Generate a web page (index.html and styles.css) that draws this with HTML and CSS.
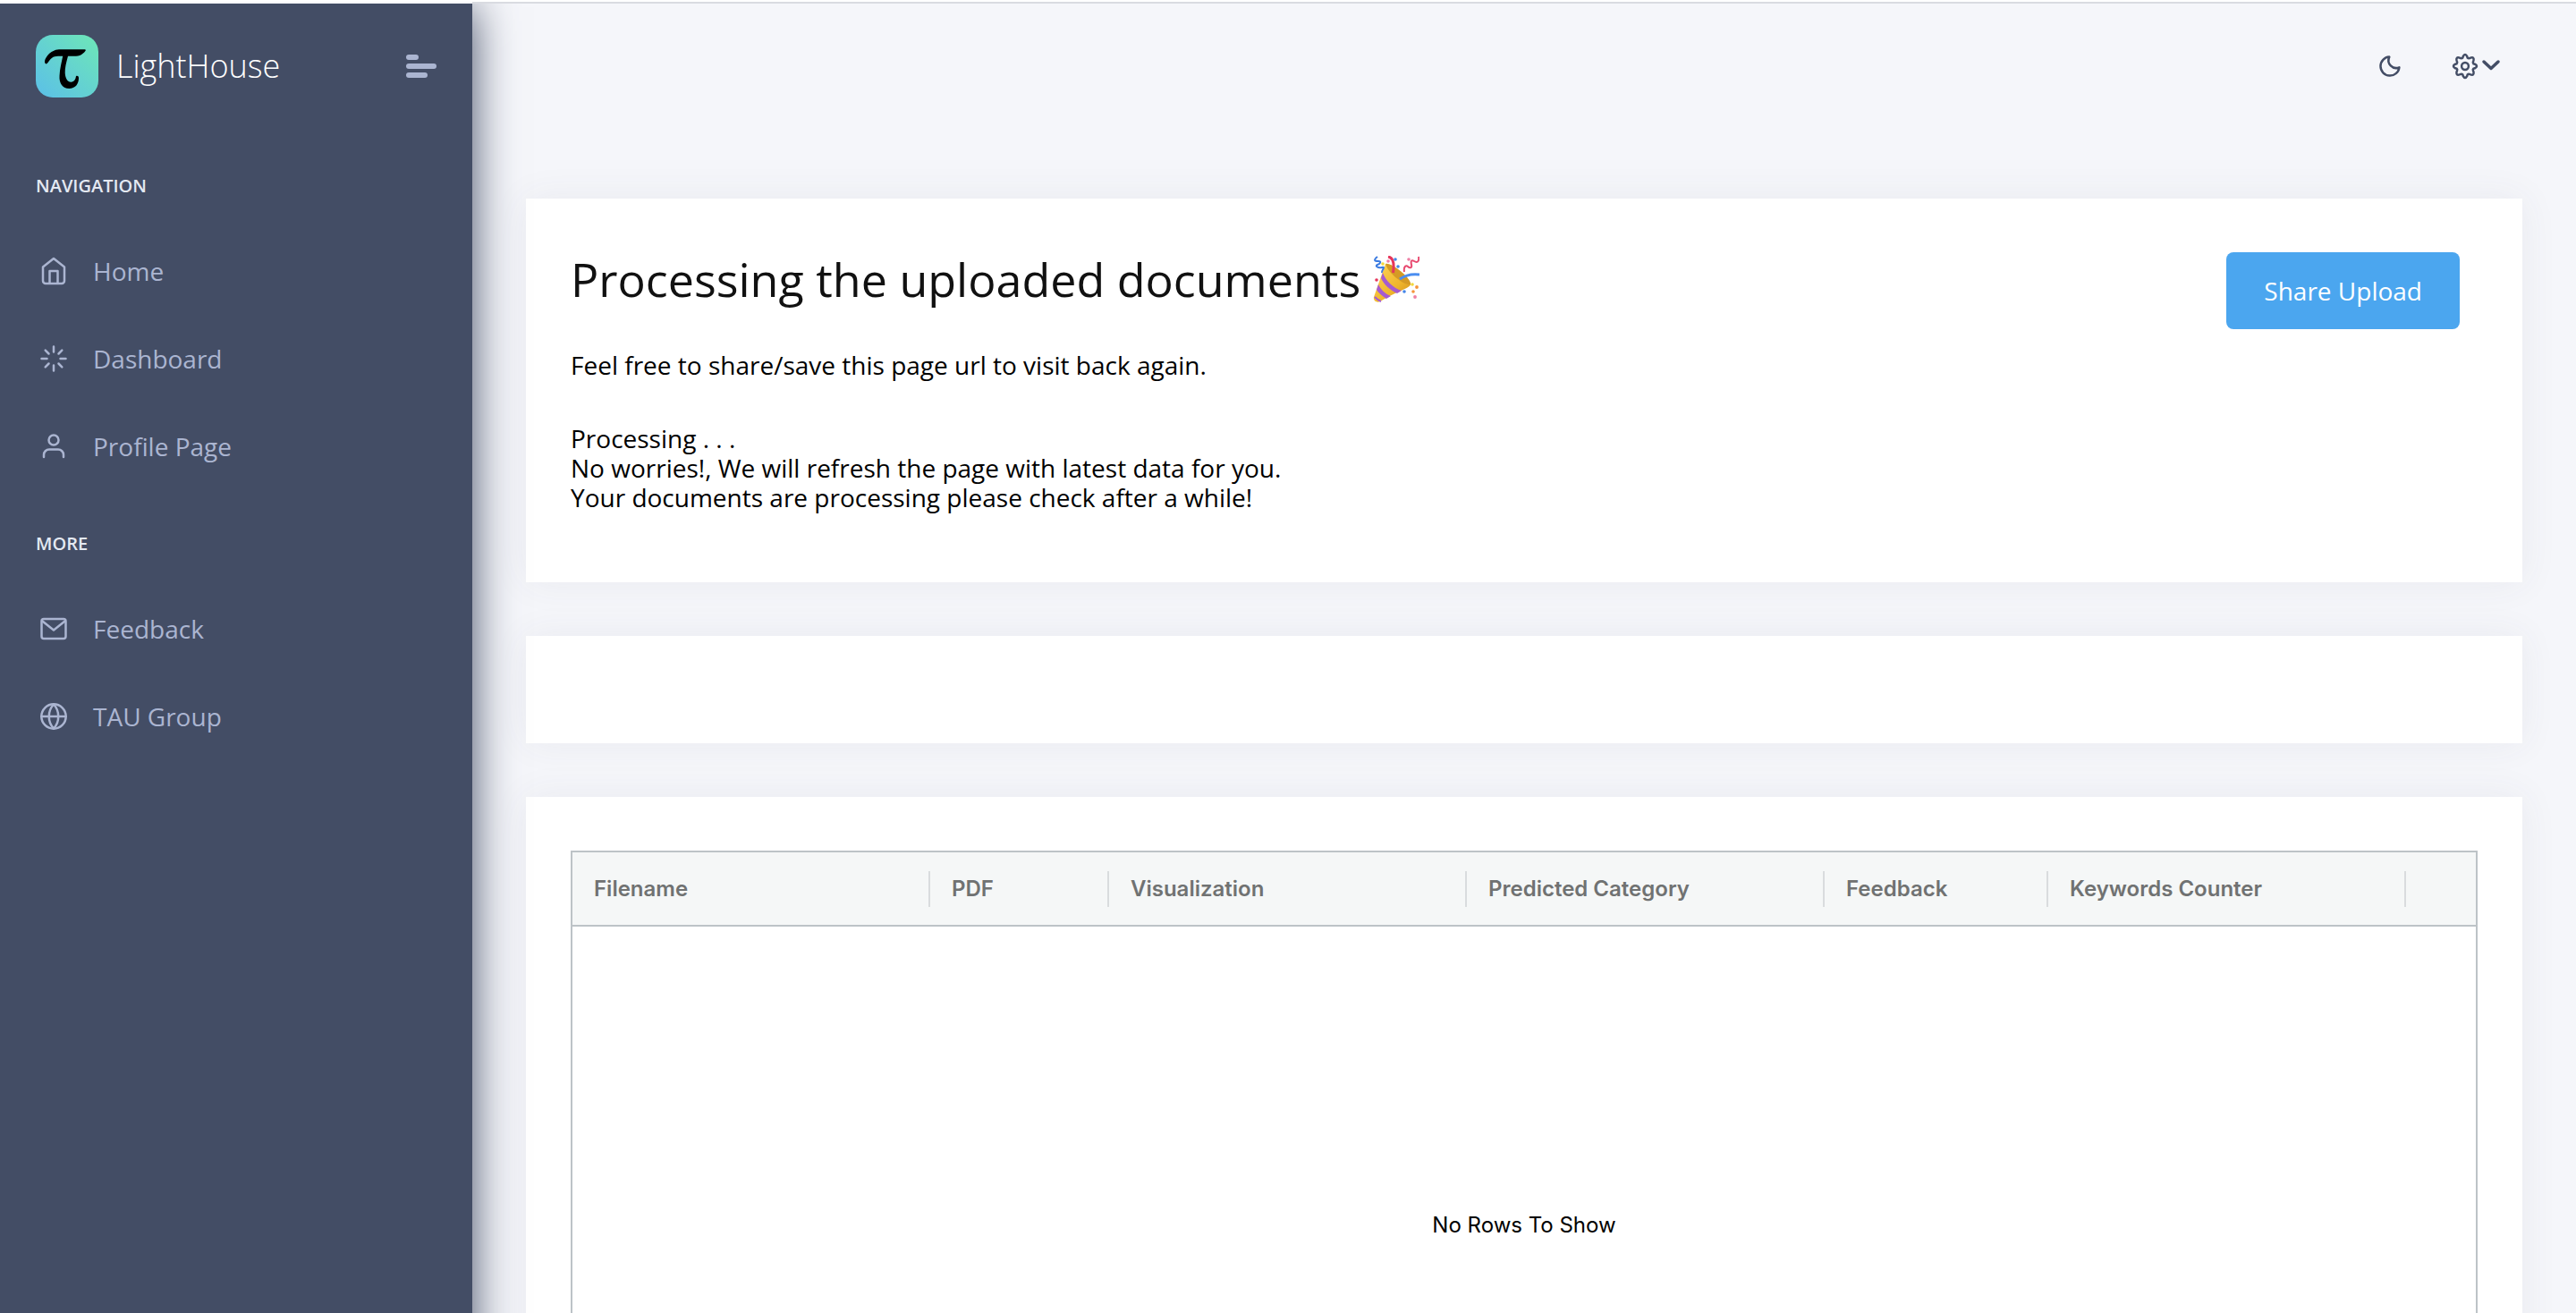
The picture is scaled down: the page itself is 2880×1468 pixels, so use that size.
FILE: index.html
```html
<!DOCTYPE html>
<html lang="en">
<head>
<meta charset="utf-8">
<meta name="viewport" content="width=device-width, initial-scale=1">
<title>LightHouse</title>
<link rel="stylesheet" href="styles.css">
</head>
<body>
<div class="app">
  <aside class="sidebar">
    <div class="brand">
      <svg class="brand-logo" viewBox="0 0 70 70" aria-hidden="true">
        <defs>
          <linearGradient id="logo-fill" x1="0" y1="1" x2="1" y2="0">
            <stop offset="0" stop-color="#5bbfe8"/>
            <stop offset="1" stop-color="#6ee7b7"/>
          </linearGradient>
        </defs>
        <rect width="70" height="70" rx="19" fill="url(#logo-fill)"/>
        <path d="M10.2 31C9 27 16 16.500 26 16.200L54 16.200C57 16.200 56 18 53 20.500C50.500 23 48 23.700 45 23.700L36 23.700C34 31 32.500 37 32.700 42.500C33 49 36 53 39.500 52.700C43 52.500 44.500 49.500 44.800 47C45 45 48 45.500 48 48C48.200 55 44 60 37.300 60C30 60 26 54 26.500 46C26.800 38 29 30 30.200 23.700L25 23.700C19 23.700 16.500 26.500 13.500 31C12.300 32.800 10.800 33 10.200 31Z" fill="#000"/>
      </svg>
      <span class="brand-name">LightHouse</span>
      <button class="menu-toggle" type="button" aria-label="Toggle menu">
        <svg width="34" height="26" viewBox="0 0 34 26" fill="currentColor" aria-hidden="true">
          <rect width="14" height="6" rx="3"/><rect y="10" width="34" height="6" rx="3"/><rect y="20" width="24" height="6" rx="3"/>
        </svg>
      </button>
    </div>
    <nav class="nav">
      <h2 class="nav-title">NAVIGATION</h2>
      <a class="nav-link" href="#home">
        <svg class="nav-icon" viewBox="0 0 40 40" aria-hidden="true"><path d="M8 15.500 20 6l12 9.500V31a3 3 0 0 1-3 3H11a3 3 0 0 1-3-3zM15.500 33V20h9v13"/></svg>
        <span>Home</span>
      </a>
      <a class="nav-link" href="#dashboard">
        <svg class="nav-icon" viewBox="0 0 40 40" aria-hidden="true"><path d="M20 6.500v6M20 27.500v6M6.500 20h6M27.500 20h6M10.700 10.700l3.800 3.800M25.500 25.500l3.800 3.800M10.700 29.300l3.800-3.800M25.500 14.500l3.800-3.800"/></svg>
        <span>Dashboard</span>
      </a>
      <a class="nav-link" href="#profile">
        <svg class="nav-icon" viewBox="0 0 40 40" aria-hidden="true"><circle cx="20" cy="13" r="5.500"/><path d="M9 32v-2.500a6 6 0 0 1 6-6h10a6 6 0 0 1 6 6V32"/></svg>
        <span>Profile Page</span>
      </a>
      <h2 class="nav-title">MORE</h2>
      <a class="nav-link" href="#feedback">
        <svg class="nav-icon" viewBox="0 0 40 40" aria-hidden="true"><rect x="6.500" y="9" width="27" height="22" rx="2.500"/><path d="M7.500 11.500 20 21.500l12.500-10"/></svg>
        <span>Feedback</span>
      </a>
      <a class="nav-link" href="#tau-group">
        <svg class="nav-icon" viewBox="0 0 40 40" aria-hidden="true"><circle cx="20" cy="20" r="13.700"/><path d="M6.500 20h27M20 6.500c7 7.500 7 19.500 0 27M20 6.500c-7 7.500-7 19.500 0 27"/></svg>
        <span>TAU Group</span>
      </a>
    </nav>
  </aside>
  <main class="main">
    <header class="topbar">
      <button class="icon-button" type="button" aria-label="Dark mode">
        <svg class="top-icon" width="32" height="32" viewBox="0 0 32 32" aria-hidden="true"><path d="M15.300 5.600A10.500 10.500 0 1 0 26.400 17.300 8.600 8.600 0 0 1 15.300 5.600Z"/></svg>
      </button>
      <button class="icon-button" type="button" aria-label="Settings">
        <svg class="top-icon" width="32" height="32" viewBox="0 0 32 32" aria-hidden="true">
          <circle cx="16" cy="16" r="3.900"/>
          <path d="M13.700 5.100Q16 .800 18.300 5.100L18.700 6.600Q19.800 7.700 21.200 7L22.100 6.600Q26.600 5.400 25.400 9.900L25 10.800Q24.300 12.200 25.400 13.300L26.900 13.700Q31.200 16 26.900 18.300L25.400 18.700Q24.300 19.800 25 21.200L25.400 22.100Q26.600 26.600 22.100 25.400L21.200 25Q19.800 24.300 18.700 25.400L18.300 26.900Q16 31.200 13.700 26.900L13.300 25.400Q12.200 24.300 10.800 25L9.900 25.400Q5.400 26.600 6.600 22.100L7 21.200Q7.700 19.800 6.600 18.700L5.100 18.300Q.800 16 5.100 13.700L6.600 13.300Q7.700 12.200 7 10.800L6.600 9.900Q5.400 5.400 9.900 6.600L10.800 7Q12.200 7.700 13.300 6.600Z"/>
        </svg>
        <svg class="top-icon chevron" width="22" height="32" viewBox="0 0 22 32" aria-hidden="true"><path d="M3 11l8 7.500 8-7.500"/></svg>
      </button>
    </header>
    <section class="card intro">
      <div class="intro-text">
        <h1 class="heading">Processing the uploaded documents
          <svg class="party" viewBox="0 0 52 52" role="img" aria-label="Party popper">
            <defs><linearGradient id="cone" x1="0" y1="0" x2="1" y2="1"><stop offset="0" stop-color="#ffd75a"/><stop offset=".6" stop-color="#efb52c"/><stop offset="1" stop-color="#cf8f1d"/></linearGradient></defs>
            <path d="M14 9C22 8 42 25 42 32C40 37 30 38 8 51C4 53 0 50 1 46Z" fill="url(#cone)"/>
            <path d="M14 9C20 7 43 25 42 32C36 34 17 20 14 9Z" fill="#d59a25"/>
            <path d="M11 19C14 28 23 36 32 39L27 42C19 38 12 32 9 25ZM6 32C9 38 14 43 20 45L15 48C10 45 6 41 4 38Z" fill="#a55bd0"/>
            <path d="M2 46q4 4 7 5" fill="none" stroke="#a55bd0" stroke-width="2"/>
            <path d="M17 1c6 1 7 8 5.500 18" fill="none" stroke="#e6365c" stroke-width="3"/>
            <path d="M30 26c7-5 14-6 22-5" fill="none" stroke="#4a8df0" stroke-width="3"/>
            <path d="M5 1c-5 4-3 5 1 5s2 3-1 4 0 4 5 3-1 3 0 6" fill="none" stroke="#3b7be0" stroke-width="2"/>
            <path d="M51 1c1 6-2 7-5 5s-4 0-3 4-2 4-4 2-5 0-4 6" fill="none" stroke="#e84a70" stroke-width="2"/>
            <g fill="#4385e8"><circle cx="25" cy="4" r="1.800"/><circle cx="28" cy="12" r="1.800"/><circle cx="35" cy="40" r="1.800"/></g>
            <g fill="#f5943a"><circle cx="49" cy="35" r="1.900"/><circle cx="45" cy="40" r="1.800"/></g>
            <g fill="#f3d83b"><circle cx="11" cy="9" r="1.800"/><circle cx="44" cy="32" r="1.800"/></g>
            <g fill="#ee7fa5"><circle cx="17" cy="6" r="1.800"/><circle cx="40" cy="4" r="1.800"/><circle cx="47" cy="46" r="1.900"/></g>
            <circle cx="4" cy="27" r="1.800" fill="#e6365c"/>
          </svg>
        </h1>
        <p class="lead">Feel free to share/save this page url to visit back again.</p>
        <p class="status">Processing . . .<br>No worries!, We will refresh the page with latest data for you.<br>Your documents are processing please check after a while!</p>
      </div>
      <button class="share-button" type="button">Share Upload</button>
    </section>
    <section class="card spacer"></section>
    <section class="card results">
      <div class="grid">
        <table class="grid-table">
          <colgroup><col class="wide"><col class="small"><col class="wide"><col class="wide"><col class="medium"><col class="wide"><col></colgroup>
          <thead>
            <tr>
              <th scope="col"><div class="cell">Filename</div></th>
              <th scope="col"><div class="cell">PDF</div></th>
              <th scope="col"><div class="cell">Visualization</div></th>
              <th scope="col"><div class="cell">Predicted Category</div></th>
              <th scope="col"><div class="cell">Feedback</div></th>
              <th scope="col"><div class="cell">Keywords Counter</div></th>
              <td></td>
            </tr>
          </thead>
          <tbody><tr><td class="empty" colspan="7">No Rows To Show</td></tr></tbody>
        </table>
      </div>
    </section>
  </main>
</div>
</body>
</html>
```

FILE: styles.css
```css
* { box-sizing: border-box; }

body {
  margin: 0;
  background: #f5f6fa;
  color: #000;
  font-family: "Open Sans", sans-serif;
  font-size: 28px;
}

h1, h2, p { margin: 0; font-weight: 400; }

button {
  border: 0;
  padding: 0;
  background: none;
  color: inherit;
  font: inherit;
  cursor: pointer;
}

.app {
  display: flex;
  height: 100vh;
  border-top: 2px solid #fff;
  overflow: hidden;
}

/* Runs past the bottom edge so its shadow does not fade out there. */
.sidebar {
  position: relative;
  z-index: 1;
  flex: none;
  width: 528px;
  margin: 2px 0 -60px;
  padding: 35px 40px;
  background: #434d65;
  color: #abb5d1;
  box-shadow: 0 4px 46px #434d65;
  clip-path: inset(0 -80px 0 0);
}

.brand { display: flex; align-items: center; height: 70px; }
.brand-logo { width: 70px; height: 70px; margin-right: 20px; }
.brand-name { color: #fff; font-size: 36px; font-weight: 300; line-height: 48px; }
.menu-toggle { display: flex; margin-left: auto; }

.nav { padding-top: 68px; }
.nav-title {
  margin-bottom: 15px;
  color: #e4e9f2;
  font-size: 20px;
  font-weight: 600;
  line-height: 62px;
}
.nav-link {
  display: flex;
  align-items: center;
  gap: 24px;
  height: 98px;
  color: inherit;
  line-height: 40px;
  text-decoration: none;
}
.nav-link + .nav-title { margin-top: 29px; }
.nav-icon { width: 40px; height: 40px; }
.nav-icon, .top-icon {
  fill: none;
  stroke: currentColor;
  stroke-width: 2.500;
  stroke-linecap: round;
  stroke-linejoin: round;
}

.main {
  flex: 1;
  min-width: 0;
  padding: 0 60px;
  border-top: 2px solid #d9dbe1;
  overflow-y: auto;
  scrollbar-width: none;
}

.topbar {
  display: flex;
  align-items: center;
  justify-content: flex-end;
  gap: 52px;
  height: 140px;
  margin-bottom: 78px;
  padding: 0 24px;
  color: #434d65;
}
.icon-button { display: flex; align-items: center; gap: 2px; }
.chevron { stroke-width: 3.500; }

.card {
  margin-bottom: 60px;
  background: #fff;
  box-shadow: 0 0 40px rgba(67, 77, 101, 0.07);
}

.intro {
  display: flex;
  align-items: flex-start;
  justify-content: space-between;
  padding: 60px 70px 78px 50px;
}
.heading { color: #111; font-size: 52px; line-height: 60px; }
.party { display: inline-block; width: 52px; height: 52px; margin-top: -8px; vertical-align: -6px; }
.lead { margin-top: 48px; line-height: 36px; }
.status { margin-top: 48px; line-height: 33px; }
.share-button {
  height: 86px;
  padding: 0 42px;
  border-radius: 8px;
  background: #4ba6ef;
  color: #fff;
}

.spacer { height: 120px; }
.results { padding: 60px 50px; }

.grid { border: 2px solid #bdc3c7; }
.grid-table {
  width: 100%;
  border-collapse: collapse;
  table-layout: fixed;
  font-family: Inter, sans-serif;
  font-size: 24px;
  line-height: 40px;
}
.wide { width: 400px; }
.medium { width: 250px; }
.small { width: 200px; }
.grid-table th, .grid-table td { padding: 0; }
.grid-table thead {
  height: 82px;
  background: #f5f7f7;
  color: #707272;
  text-align: left;
}
.grid-table thead tr { border-bottom: 2px solid #bdc3c7; }
.grid-table th { font-weight: 600; }
.cell { padding-left: 24px; border-right: 2px solid #d9dcde; }
.grid-table .empty { height: 668px; color: #000; text-align: center; }
```
